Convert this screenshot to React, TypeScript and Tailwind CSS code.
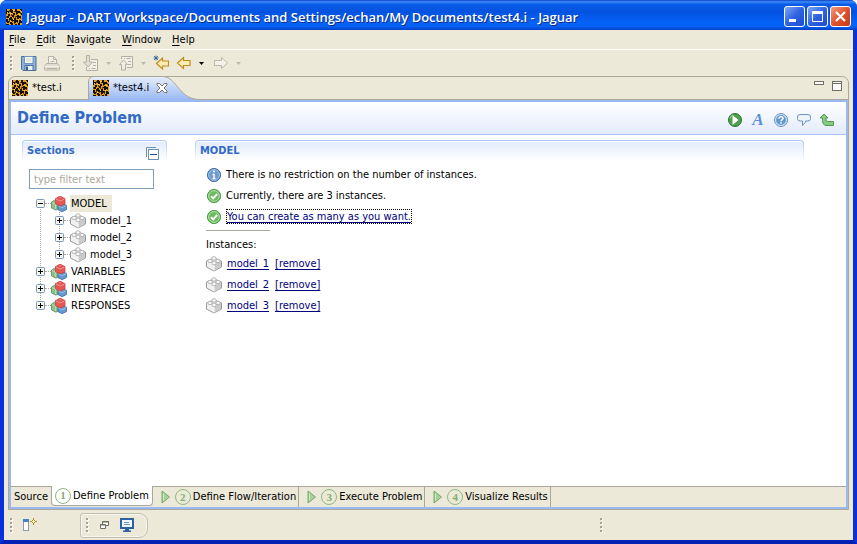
import type { ReactNode } from "react";

function Jaguar() {
  return (
    <svg width="16" height="16" viewBox="0 0 16 16" className="shrink-0" aria-hidden="true">
      <rect width="16" height="16" fill="#dd9c1c" />
      <path
        d="M4 0h2v1h1v3h-2V3H4zM0 0h1v2h2v2H1v1H0zM9 0h2v2h3v2h-2v1h-2V3H9zM14 0h2v2h-1V1h-1zM7 4h2v2H8v2H6V6h1zM2 5h2v2H3v2H1V7h1zM11 6h2v1h2v2h-2v1h-2V8h-1V7h1zM15 4h1v2h-1zM4 8h2v2h1v2H5v-1H3V9h1zM8 9h2v2h2v2h-2v1H8v-2H7v-1h1zM0 10h2v2h1v2H1v-1H0zM13 11h2v1h1v2h-2v2h-2v-2h1zM4 13h2v1h1v2H5v-1H4zM0 15h3v1H0zM9 15h2v1H9z"
        fill="#181004"
      />
      <path
        d="M3 1h1v2H3zM8 2h1v1H8zM5 5h1v2H5zM10 5h1v1h-1zM14 3h1v2h-1zM0 7h1v2H0zM9 7h1v2H9zM7 8h1v1H7zM14 9h1v1h-1zM3 11h1v2H3zM6 12h1v1H6zM11 13h1v1h-1zM8 14h1v1H8z"
        fill="#6b4308"
      />
      <path d="M7 1h2v1H7zM1 3h1v1H1zM4 4h2v1H4zM12 5h2v1h-2zM2 9h1v1H2zM7 10h1v1H7zM12 10h1v1h-1zM4 12h1v1H4z" fill="#f6c838" />
    </svg>
  );
}

function Grip() {
  return (
    <svg width="3" height="16" viewBox="0 0 3 16" className="shrink-0" aria-hidden="true">
      {[1, 5, 9, 13].map((y) => (
        <g key={y}>
          <rect x="1" y={y + 1} width="2" height="2" fill="#fff" />
          <rect x="0" y={y} width="2" height="2" fill="#a5a193" />
        </g>
      ))}
    </svg>
  );
}

function Caret({ dark = false }: { dark?: boolean }) {
  return (
    <svg width="5" height="3" viewBox="0 0 5 3" className="shrink-0" aria-hidden="true">
      <path d="M0 0h5L2.500 3z" fill={dark ? "#000" : "#bdb9a8"} />
    </svg>
  );
}

function Save() {
  return (
    <svg width="16" height="16" viewBox="0 0 16 16" aria-hidden="true">
      <path d="M.5 1.500h14.500v14H2L.5 14z" fill="#8db0d6" stroke="#4a7099" />
      <rect x="3.500" y="1.500" width="8.500" height="7" fill="#fdfcf2" stroke="#6f94bd" />
      <path d="M5 4h5.500M5 6h5.500" stroke="#cdd0c0" />
      <rect x="4" y="10.500" width="8" height="5" fill="#e8f0f8" stroke="#4a7099" />
      <rect x="5" y="11.500" width="2" height="3.500" fill="#35608f" />
    </svg>
  );
}

function Print() {
  return (
    <svg width="16" height="16" viewBox="0 0 16 16" fill="#e0ddd0" stroke="#b6b3a6" aria-hidden="true">
      <path d="M4.500 8.500v-7h5l3 3v4" fill="#f3f1e9" />
      <path d="M9.500 1.500v3h3M6.500 6.500h4" fill="none" />
      <path d="M2.500 8.500h11l2 2.500v4H.5v-4z" />
      <path d="M.5 11.500h15" fill="none" stroke="#f3f1e9" />
      <path d="M3 13.500h10" fill="none" />
    </svg>
  );
}

function Annotation({ up = false }: { up?: boolean }) {
  return (
    <svg width="16" height="16" viewBox="0 0 16 16" fill="none" stroke="#b4b1a4" aria-hidden="true">
      {up ? (
        <>
          <path d="M3.500 4V1.500h11v11H9" fill="#f1efe6" />
          <path d="M6 3.500h1M8.500 3.500h4M10 6.500h3M10 9.500h3" />
          <path d="M5.500 5l4 4.500H7.500v5.500h-4V9.500H1.500z" fill="#efede3" />
        </>
      ) : (
        <>
          <path d="M8 4.500h6.500v11h-11V12" fill="#f1efe6" />
          <path d="M10 7.500h3M10 10.500h3M6 13.500h1M8.500 13.500h4" />
          <path d="M3.500.5h3v6.500h3L5 12 .5 7h3z" fill="#e2dfd2" />
        </>
      )}
    </svg>
  );
}

function Arrow({ kind }: { kind: "edit" | "back" | "forward" }) {
  return (
    <svg width="16" height="16" viewBox="0 0 16 16" aria-hidden="true">
      {kind === "forward" && <path d="M1.500 5.500h7V2.500L14.500 8l-6 5.500v-3h-7z" fill="#f3f1e9" stroke="#bab6a8" />}
      {kind === "back" && <path d="M1.500 8l6-5.500v3h6.500v5H7.500v3z" fill="#fdedb4" stroke="#c58a1c" strokeWidth="1.200" />}
      {kind === "edit" && (
        <>
          <path d="M3.500 8.500l6-5.500v3h6v5h-6v3z" fill="#fdedb4" stroke="#c58a1c" strokeWidth="1.200" />
          <path d="M3 .5v5M.5 3h5M1 1l4 4M5 1L1 5" stroke="#2b5a88" strokeWidth=".8" />
        </>
      )}
    </svg>
  );
}

function ToolButton({ label, children }: { label: string; children: ReactNode }) {
  return (
    <button type="button" aria-label={label} className="flex shrink-0 items-center">
      {children}
    </button>
  );
}

function Brick() {
  return (
    <svg width="16" height="16" viewBox="0 0 16 16" className="shrink-0" aria-hidden="true">
      <path d="M.5 5L8 2l7.500 3v6L8 15 .5 11z" fill="#f1f1f1" stroke="#9a9a9a" />
      <path d="M8 8.500L15 5.500v5.300L8 14.500z" fill="#cbcbcb" />
      <path d="M1 5.500l7 3v6" fill="none" stroke="#fdfdfd" />
      <g fill="#fafafa" stroke="#a6a6a6" strokeWidth=".8">
        <path d="M6 1.500v2c1 .8 3 .8 4 0v-2C9 .5 7 .5 6 1.500z" />
        <path d="M2 4v2c1 .8 3 .8 4 0V4C5 3 3 3 2 4z" />
        <path d="M10 4v2c1 .8 3 .8 4 0V4c-1-1-3-1-4 0z" />
        <path d="M6 6v2.200c1 .8 3 .8 4 0V6C9 5 7 5 6 6z" />
      </g>
    </svg>
  );
}

function Bricks() {
  return (
    <svg width="16" height="16" viewBox="0 0 16 16" className="shrink-0" strokeWidth=".8" aria-hidden="true">
      <path d="M.5 6l3-1.800L7 6v7l-2 1.200L.5 12z" fill="#8cc08a" stroke="#56925a" />
      <path d="M1 6.500l3.500 1.700v5" fill="none" stroke="#c3e0c0" />
      <path d="M7 9.500l4-2 4.500 1.700v4.300l-4.300 2.200L7 13.700z" fill="#6699cf" stroke="#3a6ba6" />
      <path d="M7.500 10l3.700 1.700 4-2" fill="none" stroke="#a9c9e8" />
      <path d="M4.500 2.500L9 .6l5 1.900v5.300L9.500 10l-5-2.200z" fill="#e85654" stroke="#c84442" />
      <path d="M5 3l4.500 1.900L13.500 3" fill="none" stroke="#f6a8a4" />
      <path d="M7 1.200v1.400c1 .7 3 .7 4.200 0V1.200C10 .3 8 .3 7 1.200z" fill="#f07c78" stroke="#cf4a48" />
    </svg>
  );
}

function Check() {
  return (
    <svg width="16" height="16" viewBox="0 0 16 16" className="shrink-0" aria-hidden="true">
      <circle cx="8" cy="8" r="6.600" fill="#4fa648" stroke="#4c9a48" />
      <circle cx="8" cy="8" r="5.400" fill="#6cbb5e" stroke="#c0e6b4" />
      <path d="M5 8.200l2.200 2.200L11.200 6" fill="none" stroke="#fff" strokeWidth="1.900" />
    </svg>
  );
}

function Info() {
  return (
    <svg width="16" height="16" viewBox="0 0 16 16" className="shrink-0" aria-hidden="true">
      <circle cx="8" cy="8" r="6.600" fill="#4a7db8" stroke="#4774a8" />
      <circle cx="8" cy="8" r="5.400" fill="#6d9ccd" stroke="#a9c8e6" />
      <path d="M7 4.500h2M6.500 7.500H8v4M6.500 11.500h3" stroke="#fff" strokeWidth="1.400" fill="none" />
    </svg>
  );
}

function Toggle({ open = false }: { open?: boolean }) {
  return (
    <svg width="9" height="9" viewBox="0 0 9 9" className="shrink-0" aria-hidden="true">
      <rect x=".5" y=".5" width="8" height="8" rx="1" fill="#f6f4ee" stroke="#7898b5" />
      <path d={open ? "M2 4.500h5" : "M2 4.500h5M4.500 2v5"} stroke="#000" />
    </svg>
  );
}

function TreeRow({ label, kind, open, selected }: { label: string; kind: "group" | "model"; open?: boolean; selected?: boolean }) {
  return (
    <li className={"flex h-[17px] items-center " + (kind === "model" ? "pl-[19px]" : "")}>
      <button type="button" aria-label={"Toggle " + label} className="flex shrink-0">
        <Toggle open={open} />
      </button>
      <span className="w-[6px] shrink-0 border-t border-dotted border-[#aca899]" />
      {kind === "group" ? <Bricks /> : <Brick />}
      <span className={"ml-[3px] pl-px leading-[17px] " + (selected ? "bg-[#ece9d8] pr-[5px]" : "")}>{label}</span>
    </li>
  );
}

function SectionHead({ children, action }: { children: ReactNode; action?: ReactNode }) {
  return (
    <div className="rounded-t-[4px] bg-gradient-to-b from-[#a9c6f2] to-white px-px pt-px">
      <div className="flex h-[20px] justify-between rounded-t-[3px] border-t border-white bg-gradient-to-b from-[#e3ebfb] to-white pr-[6px] pl-[4px]">
        <h2 className="leading-[18px] font-bold text-[#316ac5]">{children}</h2>
        {action}
      </div>
    </div>
  );
}

function Message({ icon, children }: { icon: ReactNode; children: ReactNode }) {
  return (
    <div className="flex h-[21px] items-center gap-[4px]">
      {icon}
      {children}
    </div>
  );
}

function Step({ n }: { n: string }) {
  return (
    <span className="flex size-[16px] shrink-0 items-center justify-center rounded-full border border-[#8fb980] font-['Liberation_Serif',serif] text-[11px] leading-none font-bold text-[#7fae70]">
      {n}
    </span>
  );
}

function PageTab({ n, label }: { n: string; label: string }) {
  return (
    <button type="button" role="tab" className="flex items-center gap-[2px] border-r border-[#aca899] pr-[2px] pl-[8px]">
      <svg width="10" height="14" viewBox="0 0 10 14" className="mr-[2px]" aria-hidden="true">
        <path d="M1 1l7.500 6L1 13z" fill="#a9cf9b" stroke="#75a868" />
        <path d="M2.500 3.500v7" stroke="#d2e8c8" />
      </svg>
      <Step n={n} />
      {label}
    </button>
  );
}

function CaptionButton({ label, close, children }: { label: string; close?: boolean; children: ReactNode }) {
  return (
    <button
      type="button"
      aria-label={label}
      className={
        "flex size-[21px] items-center justify-center rounded-[3px] border border-white bg-gradient-to-br " +
        (close ? "from-[#f09a80] via-[#e2522c] to-[#c23a10]" : "from-[#7ea6f4] via-[#2f62e0] to-[#1c4cd0]")
      }
    >
      <svg width="19" height="19" viewBox="0 0 19 19" fill="none" stroke="#fff" aria-hidden="true">
        {children}
      </svg>
    </button>
  );
}

const menus = ["File", "Edit", "Navigate", "Window", "Help"];
const models = ["model_1", "model_2", "model_3"];

export default function App() {
  return (
    <div className="flex h-screen flex-col overflow-hidden rounded-t-[7px] bg-[#0839d8] font-['DejaVu_Sans_Condensed','DejaVu_Sans',sans-serif] text-[11px] leading-[14px] text-black">
      <header className="flex h-[30px] shrink-0 items-center bg-[linear-gradient(to_bottom,#0a3fc4_0%,#3d8cf8_6%,#0a5ce8_14%,#0453e0_40%,#0562f8_75%,#0560f4_88%,#0340c8_100%)] pt-[3px] pr-[6px] pl-[6px]">
        <Jaguar />
        <h1 className="ml-[4px] flex-1 truncate font-['Open_Sans',sans-serif] text-[13px] leading-[20px] font-semibold text-white [text-shadow:1px_1px_#0a2a8a]">
          Jaguar - DART Workspace/Documents and Settings/echan/My Documents/test4.i - Jaguar
        </h1>
        <div className="flex gap-[2px]">
          <CaptionButton label="Minimize">
            <path d="M4 13.500h7" strokeWidth="3" />
          </CaptionButton>
          <CaptionButton label="Maximize">
            <path d="M4.500 4v10.500h10V4" />
            <path d="M4 5.500h11" strokeWidth="3" />
          </CaptionButton>
          <CaptionButton label="Close" close>
            <path d="M5 5l9 9M14 5l-9 9" strokeWidth="2.200" />
          </CaptionButton>
        </div>
      </header>

      <div className="flex min-h-0 flex-1 flex-col border-x-4 border-b-4 border-[#0831d9] border-b-[#0322b4] bg-[#ece9d8]">
        <nav className="flex h-[20px] shrink-0 items-center gap-[11px] border-b border-white pl-[5px]">
          {menus.map((m) => (
            <button key={m} type="button" className="leading-[17px]">
              <span className="underline underline-offset-2">{m[0]}</span>
              {m.slice(1)}
            </button>
          ))}
        </nav>

        <div className="flex h-[26px] shrink-0 items-center pl-[6px]">
          <Grip />
          <div className="ml-[8px] flex gap-[7px]">
            <ToolButton label="Save"><Save /></ToolButton>
            <ToolButton label="Print"><Print /></ToolButton>
          </div>
          <span className="ml-[12px] flex">
            <Grip />
          </span>
          <div className="ml-[8px] flex items-center gap-[7px]">
            <ToolButton label="Next annotation"><Annotation /></ToolButton>
            <Caret />
            <ToolButton label="Previous annotation"><Annotation up /></ToolButton>
            <Caret />
            <ToolButton label="Last edit location"><Arrow kind="edit" /></ToolButton>
            <ToolButton label="Back"><Arrow kind="back" /></ToolButton>
            <Caret dark />
            <span className="ml-[2px] flex">
              <ToolButton label="Forward"><Arrow kind="forward" /></ToolButton>
            </span>
            <Caret />
          </div>
        </div>

        <main className="mx-[4px] flex min-h-0 flex-1 flex-col rounded-t-[7px] border border-[#aca899]">
          <div className="flex h-[23px] shrink-0 border-b border-[#aca899]">
            <button type="button" className="flex w-[79px] items-center gap-[4px] pl-[3px]">
              <Jaguar />
              *test.i
            </button>
            <div className="relative -mt-px flex h-[24px] w-[112px] items-center gap-[4px] pl-[5px]">
              <svg width="112" height="24" viewBox="0 0 112 24" className="absolute inset-0" aria-hidden="true">
                <defs>
                  <linearGradient id="tab" x1="0" y1="0" x2="0" y2="1">
                    <stop offset="0" stopColor="#e6eefc" />
                    <stop offset="1" stopColor="#99b9f3" />
                  </linearGradient>
                </defs>
                <path d="M.5 24V6L5.500.5H74C89 .5 90 22 110 23.500V24z" fill="url(#tab)" />
                <path d="M.5 24V6Q.5.5 6 .5H74C89 .5 90 22 110 23.500" fill="none" stroke="#aca899" />
              </svg>
              <button type="button" className="relative flex items-center gap-[4px]">
                <Jaguar />
                *test4.i
              </button>
              <button type="button" aria-label="Close test4.i" className="relative ml-[3px]">
                <svg width="12" height="12" viewBox="0 0 12 12" aria-hidden="true">
                  <path d="M1 1.500h2.500L6 4l2.500-2.500H11v1.500L8 6l3 3v1.500H8.500L6 8l-2.500 2.500H1V9l3-3-3-3z" fill="#fff" stroke="#77756a" />
                </svg>
              </button>
            </div>
            <div className="ml-auto flex gap-[8px] pt-[4px] pr-[6px]">
              <button type="button" aria-label="Minimize editor" className="h-[4px] w-[10px] border border-[#716f64] bg-white" />
              <button type="button" aria-label="Maximize editor" className="flex h-[10px] w-[10px] flex-col justify-start border border-[#716f64] bg-white pt-px">
                <span className="block h-px w-full bg-[#716f64]" />
              </button>
            </div>
          </div>

          <div className="flex min-h-0 flex-1 flex-col border-2 border-[#99b9f3] bg-white">
            <div className="flex h-[33px] shrink-0 items-center justify-between border-b border-[#a9c6f2] bg-gradient-to-b from-white to-[#e3ebfb] pr-[11px] pl-[6px]">
              <h2 className="text-[16px] leading-[20px] font-bold text-[#316ac5]">Define Problem</h2>
              <div className="flex gap-[7px] pt-[3px]">
                <ToolButton label="Run">
                  <svg width="16" height="16" viewBox="0 0 16 16" aria-hidden="true">
                    <circle cx="8" cy="8" r="6.500" fill="#4f9f4e" stroke="#2a7433" />
                    <path d="M5.500 3l6 5-6 5z" fill="#fff" />
                    <path d="M3 6.500A5.500 5.500 0 0 1 6 3" stroke="#a8dba2" fill="none" />
                  </svg>
                </ToolButton>
                <ToolButton label="Font">
                  <span className="w-[16px] text-center font-['Liberation_Serif',serif] text-[17px] leading-[16px] font-bold text-[#5d90d8] italic">A</span>
                </ToolButton>
                <ToolButton label="Help">
                  <svg width="16" height="16" viewBox="0 0 16 16" aria-hidden="true">
                    <circle cx="8" cy="8" r="6.500" fill="#d2e2f4" stroke="#6a94c4" />
                    <circle cx="8" cy="8" r="4.900" fill="#6396cc" />
                    <path d="M6 6.700c0-2.600 4-2.600 4-.2C10 8 8 7.800 8 9.300M8 10.300v1.500" fill="none" stroke="#fff" strokeWidth="1.500" />
                  </svg>
                </ToolButton>
                <ToolButton label="Comment">
                  <svg width="16" height="16" viewBox="0 0 16 16" aria-hidden="true">
                    <path d="M4 2.500h8q2.500 0 2.500 2.500v1.500Q14.500 9 12 9H9.500v1L6.500 13.500V9H4Q1.500 9 1.500 6.500V5Q1.500 2.500 4 2.500z" fill="#eef4fd" stroke="#6c94c8" />
                  </svg>
                </ToolButton>
                <ToolButton label="Return">
                  <svg width="16" height="16" viewBox="0 0 16 16" aria-hidden="true">
                    <path d="M5 2L1 6h2.500v2.500Q3.500 13.500 8 13.500h6.500v-4H8.500Q7 9.500 7 8V6H9z" fill="#8ac983" stroke="#4f9a52" />
                  </svg>
                </ToolButton>
              </div>
            </div>

            <div className="flex min-h-0 flex-1 pt-[5px] pl-[11px]">
              <section className="w-[145px] shrink-0">
                <SectionHead
                  action={
                    <button type="button" aria-label="Collapse all" className="pt-[4px]">
                      <svg width="14" height="14" viewBox="0 0 14 14" fill="#fff" stroke="#6e8fb0" aria-hidden="true">
                        <path d="M.5 10V.5H10" fill="none" />
                        <rect x="2.500" y="2.500" width="10" height="10" />
                        <path d="M4 7.500h7" stroke="#1d4f8c" />
                      </svg>
                    </button>
                  }
                >
                  Sections
                </SectionHead>
                <input
                  type="text"
                  aria-label="Filter sections"
                  placeholder="type filter text"
                  className="mt-[8px] ml-[7px] block h-[20px] w-[125px] border border-[#7f9db9] bg-white px-[4px] placeholder:text-[#aca899]"
                />
                <ul className="mt-[6px] ml-[14px] bg-[repeating-linear-gradient(to_bottom,#aca899_0px,#aca899_1px,transparent_1px,transparent_2px)] bg-[size:1px_94px] bg-[position:4px_12px] bg-no-repeat">
                  <TreeRow label="MODEL" kind="group" open selected />
                  <li>
                    <ul className="bg-[repeating-linear-gradient(to_bottom,#aca899_0px,#aca899_1px,transparent_1px,transparent_2px)] bg-[size:1px_42px] bg-[position:23px_0px] bg-no-repeat">
                      {models.map((m) => (
                        <TreeRow key={m} label={m} kind="model" />
                      ))}
                    </ul>
                  </li>
                  <TreeRow label="VARIABLES" kind="group" />
                  <TreeRow label="INTERFACE" kind="group" />
                  <TreeRow label="RESPONSES" kind="group" />
                </ul>
              </section>

              <section className="mr-[42px] ml-[28px] min-w-0 flex-1">
                <SectionHead>MODEL</SectionHead>
                <div className="pt-[3px] pl-[11px]">
                  <Message icon={<Info />}>
                    <p>There is no restriction on the number of instances.</p>
                  </Message>
                  <Message icon={<Check />}>
                    <p>Currently, there are 3 instances.</p>
                  </Message>
                  <Message icon={<Check />}>
                    <a href="#create" className="border border-dotted border-black leading-[13px] text-[#000080] underline underline-offset-2">
                      You can create as many as you want.
                    </a>
                  </Message>
                  <hr className="mt-[3px] w-[64px] border-t border-[#aca899]" />
                  <p className="mt-[7px] mb-px">Instances:</p>
                  {models.map((m) => (
                    <Message key={m} icon={<Brick />}>
                      <a href={"#" + m} className="ml-px text-[#000080] underline underline-offset-2">{m}</a>
                      <a href={"#remove-" + m} className="ml-[2px] text-[#000080] underline underline-offset-2">[remove]</a>
                    </Message>
                  ))}
                </div>
              </section>
            </div>

            <div role="tablist" className="flex h-[21px] shrink-0 border-t border-[#aca899] bg-[#ece9d8]">
              <button type="button" role="tab" className="px-[3px]">Source</button>
              <button
                type="button"
                role="tab"
                aria-selected="true"
                className="-mt-px flex h-[20px] items-center gap-[2px] rounded-b-[4px] border-x border-b border-[#aca899] bg-white px-[3px]"
              >
                <Step n="1" />
                Define Problem
              </button>
              <PageTab n="2" label="Define Flow/Iteration" />
              <PageTab n="3" label="Execute Problem" />
              <PageTab n="4" label="Visualize Results" />
            </div>
          </div>
        </main>

        <footer className="grid h-[30px] shrink-0 grid-cols-[590px_1fr] items-center pl-[6px]">
          <div className="flex items-center">
            <Grip />
            <button type="button" aria-label="Open perspective" className="ml-[9px]">
              <svg width="16" height="16" viewBox="0 0 16 16" aria-hidden="true">
                <rect x="1.500" y="3.500" width="5" height="10" fill="#fff" stroke="#8a9bb0" />
                <rect x="1" y="2" width="6" height="3" fill="#4484c0" />
                <path d="M11.500 1v7M8 4.500h7" stroke="#b98a14" />
                <path d="M11.500 2.500l2 2-2 2-2-2z" fill="#fff6c8" stroke="#b98a14" />
              </svg>
            </button>
            <div className="ml-[42px] flex h-[25px] w-[68px] items-center rounded-l-[3px] rounded-r-[9px] border border-[#c3bfb0] pl-[5px] shadow-[inset_0_0_0_1px_#f7f6f0]">
              <Grip />
              <button type="button" aria-label="Restore" className="ml-[10px]">
                <svg width="11" height="10" viewBox="0 0 11 10" fill="#fff" stroke="#716f64" aria-hidden="true">
                  <path d="M3.500 1.500h6v4h-6zM3 2h7" />
                  <path d="M1.500 4.500h5v4h-5zM1 5h6" />
                </svg>
              </button>
              <button type="button" aria-label="Console" className="ml-[10px]">
                <svg width="14" height="14" viewBox="0 0 14 14" aria-hidden="true">
                  <rect x="1" y="1" width="12" height="9" fill="#f0f6fd" stroke="#2c62a4" strokeWidth="2" />
                  <path d="M4 4.500h5M4 6.500h6" stroke="#6a93c4" />
                  <path d="M5 11h4v1.500h2V14H3v-1.500h2z" fill="#2c62a4" />
                </svg>
              </button>
            </div>
          </div>
          <Grip />
        </footer>
      </div>
    </div>
  );
}
